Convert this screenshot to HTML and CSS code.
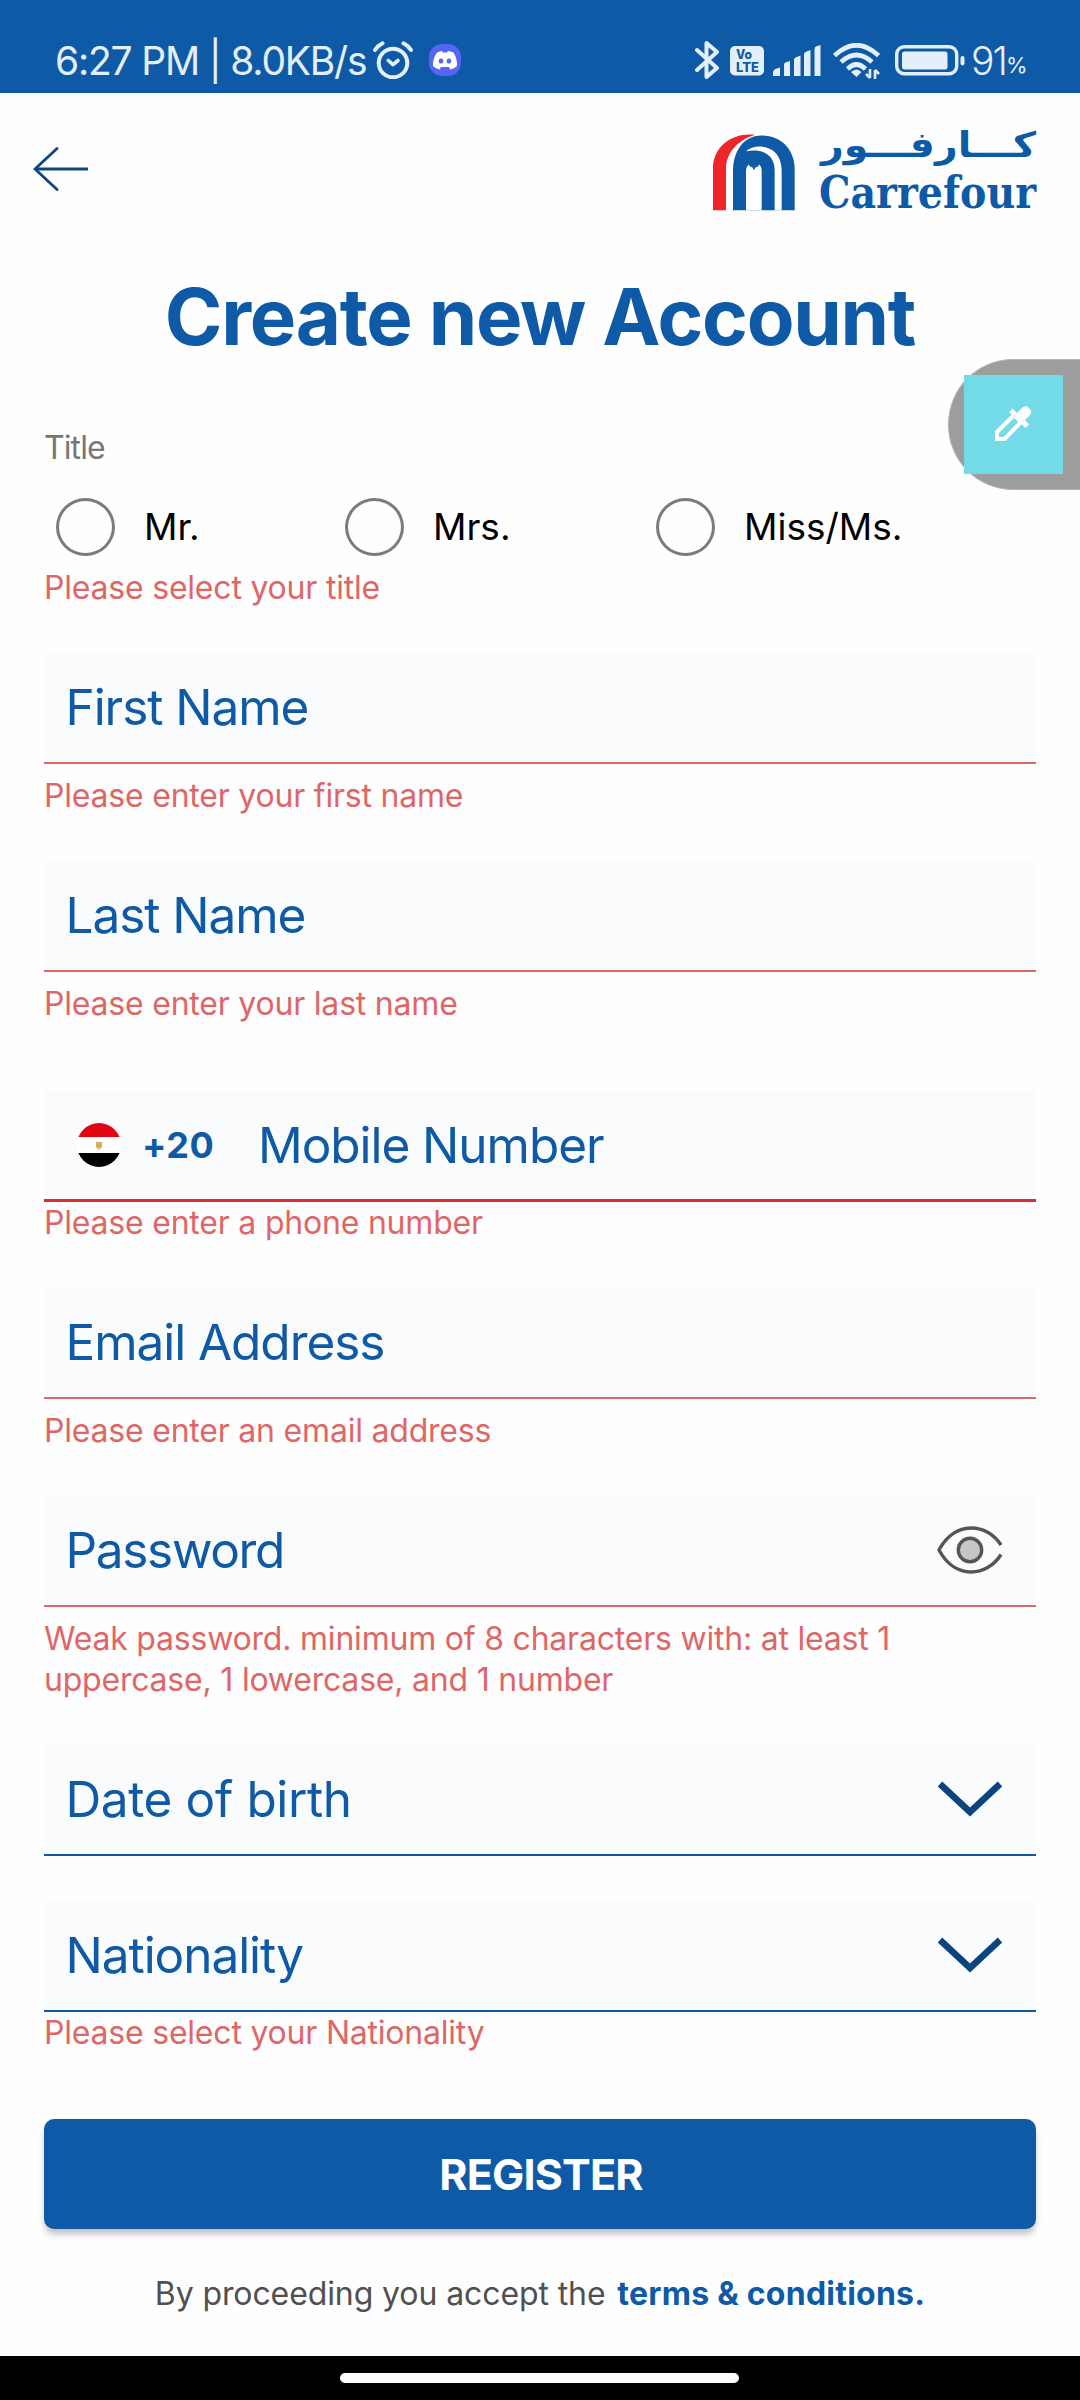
FILE: index.html
```html
<!DOCTYPE html>
<html lang="en">
<head>
<meta charset="utf-8">
<title>Create new Account</title>
<link rel="stylesheet" href="styles.css">
</head>
<body>
<div class="status">
  <span class="clock">6:27 PM | 8.0KB/s</span>
  <svg class="alarm" width="40" height="38" viewBox="0 0 40 38" fill="none" stroke="#e3effb" stroke-linecap="round">
    <circle cx="20" cy="22" r="14.3" stroke-width="4"/>
    <path d="M2 9Q5 4.500 9.500 2.300M30.500 2.300Q35 4.500 38 9" stroke-width="4"/>
    <path d="M15.300 19.500L20 23.700L25 19.500" stroke-width="3.600" stroke-linejoin="round"/>
  </svg>
  <svg class="discord" width="32" height="32" viewBox="0 0 32 32">
    <rect width="32" height="32" rx="13" fill="#5865f2"/>
    <path d="M8 8.500Q11 7 13 7L14 8.500H18L19 7Q21.500 7 24.500 8.500Q28.500 15 28 22Q25 25 21.500 25.500L20 23H12L10.500 25.500Q7 25 4 22Q3.500 15 8 8.500z" fill="#fff"/>
    <ellipse cx="12" cy="17" rx="2.300" ry="2.600" fill="#5865f2"/><ellipse cx="20" cy="17" rx="2.300" ry="2.600" fill="#5865f2"/>
  </svg>
  <div class="status-right">
    <svg width="25" height="40" viewBox="0 0 25 40" fill="none" stroke="#e3effb" stroke-width="4" stroke-linejoin="round" stroke-linecap="round">
      <path d="M2 10L22 28L11.500 37V3L22 12L2 30"/>
    </svg>
    <svg class="volte" width="34" height="30" viewBox="0 0 34 30">
      <rect width="34" height="29.500" rx="5" fill="#e3effb"/>
      <text x="6" y="13" font-size="12.500" textLength="16" lengthAdjust="spacingAndGlyphs">Vo</text>
      <text x="6" y="25.500" font-size="13" textLength="23" lengthAdjust="spacingAndGlyphs">LTE</text>
    </svg>
    <svg class="signal" width="48" height="31" viewBox="0 0 48 31" fill="#e3effb">
      <path d="M0 31V28Q0 25 3 23.800L7 22.500V31zM11 31V20Q11 18 13 17.300L17 16V31zM21 31V15Q21 13 23 12.200L27.500 10.500V31zM31 31V9.500Q31 7.500 33 6.700L37.500 5V31zM41.500 31V4Q41.500 2 43.500 1.200L47.500 0V31z"/>
    </svg>
    <svg class="wifi" width="47" height="36" viewBox="0 0 47 36" fill="none" stroke="#e3effb" stroke-width="4.600">
      <path d="M1.500 12.500Q23.500 -8 45.500 12.500M8 19Q23.500 5 39 19M14.500 26Q23.500 17 32.500 26"/>
      <path d="M18 29Q23.500 24 28.500 29L23.500 34z" fill="#e3effb" stroke="none"/>
      <path d="M37 26V35M33 31L37 35M42 36V27M42 27L46 31" stroke-width="2.600"/>
    </svg>
    <svg class="battery" width="70" height="31" viewBox="0 0 70 31">
      <rect x="1.700" y="1.700" width="60" height="27" rx="7.500" fill="none" stroke="#e3effb" stroke-width="3.400"/>
      <rect x="7" y="6.500" width="45.500" height="18" rx="2.500" fill="#e3effb"/>
      <rect x="65.500" y="11" width="4" height="9.500" rx="2" fill="#e3effb"/>
    </svg>
    <span class="level">91</span><span class="percent">%</span>
  </div>
</div>

<header class="header">
  <svg class="back" width="58" height="48" viewBox="0 0 58 48" fill="none" stroke="#0b4680" stroke-width="2.800" stroke-linecap="round">
    <path d="M24 3.500L2 24L24 44.500"/><path d="M2.500 24H55" stroke-linecap="butt"/>
  </svg>
  <svg class="logo" width="326" height="86" viewBox="0 0 326 86">
    <g transform="translate(1 6.500) scale(.3333)">
      <path d="M0 227V102C0 40 50 0 110 0L127 1C80 15 39 50 39 105V227z" fill="#ee2529"/>
      <path d="M60 227V105C62 40 100 3 145 3C205 3 245 45 245 105V227z" fill="#0f5aa6"/>
      <path d="M100 50C125 25 206 28 206 107V227H185V108C185 58 145 42 102 50z" fill="#fff"/>
      <path d="M99 227V106Q100 97 107 90L114 99L117 97L123 107L129 97L132 99L139 90Q146 97 146 106V227z" fill="#fff"/>
    </g>
    <text class="logo-ar" x="324" y="29" direction="rtl" textLength="215" lengthAdjust="spacingAndGlyphs">كـــارفـــور</text>
    <text class="logo-en" x="107" y="79.500" textLength="217" lengthAdjust="spacingAndGlyphs">Carrefour</text>
  </svg>
</header>

<div class="picker">
  <div class="swatch">
    <svg width="38" height="38" viewBox="0 0 38 38">
      <path d="M3 27L20 10L27 17L10.500 34H3z" fill="none" stroke="#fff" stroke-width="4"/>
      <path d="M18.500 3.500L23 8L28.500 2.500Q31.500 0 34.500 2.500L36 4Q38.500 7 36 10L31 15L35 19.500L31.500 23L15 7z" fill="#fff"/>
    </svg>
  </div>
</div>

<main class="form">
  <h1 class="heading">Create new Account</h1>

  <div class="label">Title</div>
  <div class="radios">
    <div class="option"><i class="radio"></i><span>Mr.</span></div>
    <div class="option"><i class="radio"></i><span>Mrs.</span></div>
    <div class="option"><i class="radio"></i><span>Miss/Ms.</span></div>
  </div>
  <p class="error">Please select your title</p>

  <div class="field">First Name</div>
  <p class="error">Please enter your first name</p>

  <div class="field">Last Name</div>
  <p class="error">Please enter your last name</p>

  <div class="field phone">
    <svg class="flag" width="44" height="44" viewBox="0 0 44 44">
      <clipPath id="round"><circle cx="22" cy="22" r="22"/></clipPath>
      <g clip-path="url(#round)">
        <path d="M0 0H44V14H0z" fill="#e00613"/><path d="M0 14H44V30H0z" fill="#fff"/><path d="M0 30H44V44H0z" fill="#000"/>
        <path d="M19 18.500L21 19.500L22 18L23 19.500L25 18.500V24L23.500 25.500H20.500L19 24z" fill="#d4b04e"/>
        <path d="M20 26H24" stroke="#e6cf8f"/>
      </g>
    </svg>
    <b class="dial">+20</b>
    <span>Mobile Number</span>
  </div>
  <p class="error tight">Please enter a phone number</p>

  <div class="field">Email Address</div>
  <p class="error">Please enter an email address</p>

  <div class="field password">Password
    <svg class="eye" width="66" height="48" viewBox="0 0 66 48" fill="none" stroke="#555" stroke-width="3.400">
      <path d="M64 19C50 -3 18 -6 2 24C18 54 50 51 64 28.500"/>
      <circle cx="33" cy="24" r="11.700" fill="#c6c6c6"/>
    </svg>
  </div>
  <p class="error">Weak password. minimum of 8 characters with: at least 1<br>uppercase, 1 lowercase, and 1 number</p>

  <div class="field select dob">Date of birth
    <svg width="66" height="36" viewBox="0 0 66 36" fill="none" stroke="#0b457f" stroke-width="6.500"><path d="M3 3L33 31L63 3"/></svg>
  </div>

  <div class="field select">Nationality
    <svg width="66" height="36" viewBox="0 0 66 36" fill="none" stroke="#0b457f" stroke-width="6.500"><path d="M3 3L33 31L63 3"/></svg>
  </div>
  <p class="error tight">Please select your Nationality</p>

  <button class="register">REGISTER</button>
  <p class="terms">By proceeding you accept the <b>terms &amp; conditions.</b></p>
</main>

<div class="nav"><div class="pill"></div></div>
</body>
</html>
```
FILE: styles.css
```css
* { box-sizing: border-box; }

body {
  margin: 0;
  width: 1080px;
  height: 2400px;
  display: flex;
  flex-direction: column;
  background: #fefefe;
  font-family: Inter, "Liberation Sans", sans-serif;
  overflow: hidden;
  position: relative;
}

svg { display: block; flex: none; }

/* status bar */
.status {
  height: 93px;
  padding: 28px 54px 0 55px;
  display: flex;
  align-items: flex-start;
  background: #0f5aa6;
  color: #e3effb;
}
.clock { width: 318px; font-size: 39px; line-height: 65px; letter-spacing: -1.2px; white-space: pre; }
.alarm { margin-top: 13px; }
.discord { margin: 16px 0 0 16px; }
.status-right { display: flex; margin-left: auto; }
.status-right > svg:first-child { margin-top: 12px; }
.volte { margin: 18px 0 0 10px; }
.volte text { font-weight: 800; fill: #0f5aa6; }
.signal { margin: 17px 0 0 9px; }
.wifi { margin: 15px 0 0 12px; }
.battery { margin: 17px 0 0 15px; }
.level { margin-left: 6px; width: 35px; font-size: 39px; line-height: 65px; letter-spacing: -2px; font-weight: 300; }
.percent { font-size: 22px; line-height: 74px; width: 20px; }

/* header */
.header {
  height: 176px;
  padding: 35px 42px 0 33px;
  display: flex;
  justify-content: space-between;
}
.back { margin-top: 17px; }
.logo { overflow: visible; }
.logo text { fill: #0f5aa6; font-weight: 700; }
.logo-ar { font-family: "DejaVu Sans", sans-serif; font-size: 35px; }
.logo-en { font-family: "DejaVu Serif", serif; font-size: 44px; }

/* floating colour picker */
.picker {
  position: absolute;
  top: 359px;
  right: 0;
  width: 132px;
  height: 131px;
  padding: 15px;
  border: 1px solid #b5b5b5;
  border-right: 0;
  border-radius: 65px 0 0 65px;
  background: #9d9d9d;
}
.swatch {
  width: 99px;
  height: 99px;
  padding-right: 2px;
  padding-bottom: 2px;
  display: flex;
  align-items: center;
  justify-content: center;
  background: #73dbe7;
}

/* form */
.form {
  flex: 1;
  padding: 0 44px;
  display: flex;
  flex-direction: column;
}
.heading {
  margin: 0;
  font-size: 78px;
  line-height: 95px;
  height: 94px;
  font-weight: 700;
  letter-spacing: -1.28px;
  text-align: center;
  color: #0f5aa6;
}
.label { margin-top: 64px; font-size: 32px; line-height: 41px; letter-spacing: -.9px; color: #777; }
.radios { margin-top: 30px; height: 58px; padding-left: 12px; display: flex; }
.option { display: flex; align-items: center; gap: 29px; font-size: 37px; letter-spacing: 0; color: #000; }
.option span { padding-bottom: 2px; }
.option:nth-child(1) { width: 289px; }
.option:nth-child(2) { width: 311px; }
.radio { width: 59px; height: 58px; border: 3.5px solid #7b7b7b; border-radius: 50%; }
.error { margin: 11px 0 0; font-size: 32px; line-height: 41px; letter-spacing: -.21px; color: #e06666; }
.error.tight { margin-top: 0; }

.field {
  margin-top: 44px;
  height: 112px;
  padding: 0 33px 0 21.5px;
  display: flex;
  align-items: center;
  justify-content: space-between;
  background: #fafbfd;
  border-bottom: 2px solid #dc686b;
  font-size: 49.5px;
  letter-spacing: -1.05px;
  color: #0f5aa6;
}
.phone {
  margin-top: 66px;
  padding: 1px 0 0 33px;
  justify-content: flex-start;
  border-bottom: 3px solid #d93035;
}
.dial { margin-left: 21px; width: 116px; font-size: 36px; letter-spacing: .6px; }
.password { letter-spacing: -1.32px; }
.dob { letter-spacing: -.38px; }
.select { border-color: #0f5aa6; }

.register {
  margin-top: 66px;
  height: 110px;
  border: 0;
  border-radius: 10px;
  background: #0f5aa6;
  box-shadow: 0 6px 7px -1px rgba(0, 0, 0, .25);
  color: #fff;
  font: 700 43px/110px Inter, "Liberation Sans", sans-serif;
  letter-spacing: -.8px;
  padding: 0 0 0 2px;
}
.terms {
  margin: 44px 0 0;
  font-size: 32px;
  line-height: 41px;
  letter-spacing: -.1px;
  text-align: center;
  color: #505050;
}
.terms b { margin-left: 3px; letter-spacing: .24px; color: #0f5aa6; }

/* navigation bar */
.nav { height: 44px; padding-top: 17px; background: #000; }
.pill { width: 399px; height: 10px; margin-left: 340px; border-radius: 5px; background: #fff; }
```
